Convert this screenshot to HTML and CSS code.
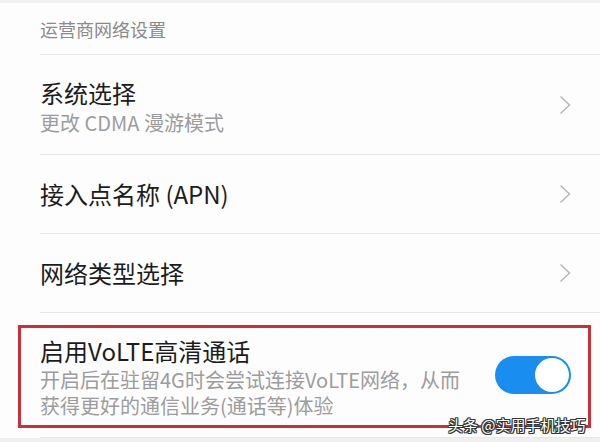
FILE: index.html
```html
<!DOCTYPE html>
<html lang="zh-CN">
<head>
  <meta charset="UTF-8">
  <title>运营商网络设置</title>
  <link rel="stylesheet" href="styles.css">
</head>
<body>
  <div class="page">
    <div class="top-strip"></div>

    <div class="section-title">运营商网络设置</div>

    <ul class="settings">
      <li class="item item-tall">
        <div class="text">
          <div class="title">系统选择</div>
          <div class="summary">更改 CDMA 漫游模式</div>
        </div>
        <svg class="chevron" width="12" height="20" viewBox="0 0 12 20">
          <polyline points="1.5,1.5 10.5,10 1.5,18.5" fill="none" stroke="#b4b4b4" stroke-width="1.4" />
        </svg>
      </li>
      <li class="item">
        <div class="text">
          <div class="title">接入点名称 (APN)</div>
        </div>
        <svg class="chevron" width="12" height="20" viewBox="0 0 12 20">
          <polyline points="1.5,1.5 10.5,10 1.5,18.5" fill="none" stroke="#b4b4b4" stroke-width="1.4" />
        </svg>
      </li>
      <li class="item">
        <div class="text">
          <div class="title">网络类型选择</div>
        </div>
        <svg class="chevron" width="12" height="20" viewBox="0 0 12 20">
          <polyline points="1.5,1.5 10.5,10 1.5,18.5" fill="none" stroke="#b4b4b4" stroke-width="1.4" />
        </svg>
      </li>
      <li class="item item-volte">
        <div class="text">
          <div class="title">启用VoLTE高清通话</div>
          <div class="summary summary-long">开启后在驻留4G时会尝试连接VoLTE网络，从而获得更好的通信业务(通话等)体验</div>
        </div>
        <div class="switch on"></div>
      </li>
    </ul>

    <div class="bottom-strip"></div>

    <!-- annotation + watermark over the screenshot -->
    <div class="highlight"></div>
    <div class="watermark">头条 @实用手机技巧</div>
  </div>
</body>
</html>
```

FILE: styles.css
```css
:root {
  --text-color: #1c1c1c;
  --muted-color: #9c9c9c;
  --header-color: #8a8a8a;
  --divider: #e8e8e8;
  --accent: #1a8ef0;
  --mark-red: #c8303a;
}

body {
  margin: 0;
  background: #fff;
  font-family: "Noto Sans CJK SC", "Noto Sans", sans-serif;
  color: var(--text-color);
}

.page {
  position: relative;
  width: 600px;
  height: 442px;
  overflow: hidden;
  background: #fdfdfd;
}

.top-strip {
  height: 3px;
  background: #f1f1f1;
}

.section-title {
  height: 51px;
  margin-left: 40px;
  border-bottom: 1px solid var(--divider);
  font-size: 18px;
  line-height: 52px;
  color: var(--header-color);
}

.settings {
  list-style: none;
  margin: 0;
  padding: 0;
}

.item {
  display: flex;
  align-items: center;
  gap: 20px;
  margin-left: 40px;
  padding-right: 29px;
  min-height: 78px;
  border-bottom: 1px solid var(--divider);
}

.item-tall {
  min-height: 99px;
}

.item-tall .text {
  padding-top: 6px;
}

.item-volte {
  min-height: 124px;
}

.item-volte .text {
  padding-top: 5px;
}

.text {
  flex: 1;
  min-width: 0;
}

.title {
  font-size: 24px;
  line-height: 30px;
  color: var(--text-color);
}

.summary {
  font-size: 20px;
  line-height: 30px;
  color: var(--muted-color);
}

.summary-long {
  line-height: 26px;
  margin-top: 1px;
}

.chevron {
  flex: none;
  display: block;
}

.switch {
  position: relative;
  flex: none;
  width: 76px;
  height: 38px;
  border-radius: 19px;
  background: #d0d0d0;
}

.switch.on {
  background: var(--accent);
}

.switch::after {
  content: "";
  position: absolute;
  top: 2px;
  left: 2px;
  width: 34px;
  height: 34px;
  border-radius: 50%;
  background: #fff;
}

.switch.on::after {
  left: auto;
  right: 2px;
}

.bottom-strip {
  height: 10px;
  background: #efefef;
}

.highlight {
  position: absolute;
  left: 18px;
  top: 325px;
  width: 567px;
  height: 97px;
  border: 3px solid var(--mark-red);
}

.watermark {
  position: absolute;
  left: 448px;
  top: 415px;
  font-size: 15px;
  line-height: 20px;
  color: #fff;
  white-space: nowrap;
  text-shadow:
    1px 0 0 #333, -1px 0 0 #333, 0 1px 0 #333, 0 -1px 0 #333,
    1px 1px 0 #333, -1px -1px 0 #333, 1px -1px 0 #333, -1px 1px 0 #333;
}
```
